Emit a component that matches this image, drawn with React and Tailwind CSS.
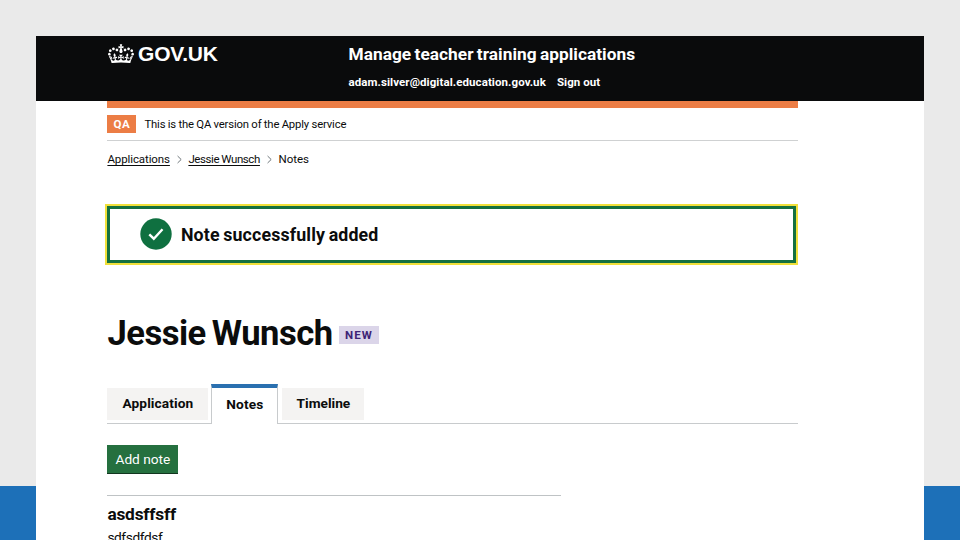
const CROWN =
  "M25 30.2c3.5 1.5 7.7-.2 9.1-3.7 1.5-3.6-.2-7.8-3.9-9.2-3.6-1.4-7.6.3-9.1 3.9-1.4 3.5.3 7.5 3.9 9zM9 39.5c3.6 1.5 7.8-.2 9.2-3.7 1.5-3.6-.2-7.8-3.9-9.1-3.6-1.5-7.6.2-9.1 3.8-1.4 3.5.3 7.5 3.8 9zM4.4 57.2c3.5 1.5 7.7-.2 9.1-3.8 1.5-3.6-.2-7.7-3.9-9.1-3.5-1.5-7.6.3-9.1 3.8-1.4 3.5.3 7.6 3.9 9.1zm38.3-21.4c3.5 1.5 7.7-.2 9.1-3.8 1.5-3.6-.2-7.7-3.9-9.1-3.6-1.5-7.6.3-9.1 3.8-1.3 3.6.4 7.7 3.9 9.1zm64.4-5.6c-3.6 1.5-7.8-.2-9.1-3.7-1.5-3.6.2-7.8 3.8-9.2 3.6-1.4 7.7.3 9.2 3.9 1.3 3.5-.4 7.5-3.9 9zm15.9 9.3c-3.6 1.5-7.7-.2-9.1-3.7-1.5-3.6.2-7.8 3.7-9.1 3.6-1.5 7.7.2 9.2 3.8 1.5 3.5-.3 7.5-3.8 9zm4.7 17.7c-3.6 1.5-7.8-.2-9.2-3.8-1.5-3.6.2-7.7 3.9-9.1 3.6-1.5 7.7.3 9.2 3.8 1.3 3.5-.4 7.6-3.9 9.1zM89.3 35.8c-3.6 1.5-7.8-.2-9.2-3.8-1.4-3.6.2-7.7 3.9-9.1 3.6-1.5 7.7.3 9.2 3.8 1.4 3.6-.3 7.7-3.9 9.1zM69.7 17.7l8.9 4.7V9.3l-8.9 2.8c-.2-.3-.5-.6-.9-.9L72.4 0H59.6l3.5 11.2c-.3.3-.6.5-.9.9l-8.8-2.8v13.1l8.8-4.7c.3.3.6.7.9.9l-5 15.4v.1c-.2.8-.4 1.6-.4 2.4 0 4.1 3.1 7.5 7 8.1h.2c.3 0 .7.1 1 .1.4 0 .7 0 1-.1h.2c4-.6 7.1-4.1 7.1-8.1 0-.8-.1-1.7-.4-2.4V34l-5.1-15.4c.4-.2.7-.6 1-.9zM66 92.8c16.9 0 32.8 1.1 47.1 3.2 4-16.9 8.9-26.7 14-33.5l-9.6-3.4c1 4.9 1.1 7.2 0 10.2-1.5-1.4-3-4.3-4.2-8.7L108.6 76c2.8-2 5-3.2 7.5-3.3-4.4 9.4-10 11.9-13.6 11.2-4.3-.8-6.3-4.6-5.6-7.9 1-4.7 5.7-5.9 8-.5 4.3-8.7-3-11.4-7.6-8.8 7.1-7.2 7.9-13.5 2.1-21.1-8 6.1-8.1 12.3-4.5 20.8-4.7-5.4-12.1-2.5-9.5 6.2 3.4-5.2 7.9-2 7.2 3.1-.6 4.3-6.4 7.8-13.5 7.2-10.3-.9-10.9-8-11.2-13.8 2.5-.5 7.1 1.8 11 7.3L80.2 60c-4.1 4.4-8 5.3-12.3 5.4 1.4-4.4 8-11.6 8-11.6H55.5s6.4 7.2 7.9 11.6c-4.2-.1-8-1-12.3-5.4l1.4 16.4c3.9-5.5 8.5-7.7 10.9-7.3-.3 5.8-.9 12.8-11.1 13.8-7.2.6-12.9-2.9-13.5-7.2-.7-5 3.8-8.3 7.1-3.1 2.7-8.7-4.6-11.6-9.4-6.2 3.7-8.5 3.6-14.7-4.6-20.8-5.8 7.6-5 13.9 2.2 21.1-4.7-2.6-11.9.1-7.7 8.8 2.3-5.5 7.1-4.2 8.1.5.7 3.3-1.3 7.1-5.7 7.9-3.5.7-9-1.8-13.5-11.2 2.5.1 4.7 1.3 7.5 3.3l-4.7-15.4c-1.2 4.4-2.7 7.2-4.3 8.7-1.1-3-.9-5.3 0-10.2l-9.5 3.4c5 6.9 9.9 16.7 14 33.5 14.8-2.1 30.8-3.2 47.7-3.2z";

function Header() {
  return (
    <header className="flex h-[64.5px] bg-[#0a0b0c] pl-[71.5px] text-white">
      <div className="flex h-9 w-[241px] items-center pb-[1px]">
        <svg viewBox="0 0 132 97" className="h-[19.5px] w-[26px]" fill="currentColor">
          <path d={CROWN} />
        </svg>
        <span className="ml-[4.5px] pt-[1px] font-['Liberation_Sans',sans-serif] text-[21px] leading-9 font-bold tracking-[-0.2px]">GOV.UK</span>
      </div>
      <div className="flex flex-col">
        <span className="h-9 text-[17.3px] leading-9 font-bold [word-spacing:-1px] tracking-[0.03px]">Manage teacher training applications</span>
        <nav className="flex gap-[11px] text-[11.5px] leading-5 font-bold tracking-[0.08px]">
          <a>adam.silver@digital.education.gov.uk</a>
          <a>Sign out</a>
        </nav>
      </div>
    </header>
  );
}

function Chevron() {
  return (
    <svg viewBox="0 0 6 10" className="h-[9px] w-[5px]" fill="none" stroke="#505a5f" strokeWidth="1">
      <path d="M0.7 0.8 5 5 0.7 9.2" />
    </svg>
  );
}

function Banner() {
  return (
    <section className="mt-[35px] -ml-[2px] h-[61px] w-[692.5px] bg-[#f0e03a] p-[2px]">
      <div className="flex h-[57px] items-center border-[3px] border-[#14703f] bg-white pl-[29.5px]">
        <svg viewBox="0 0 32 32" className="h-8 w-8" fill="none">
          <circle cx="16" cy="16" r="15.7" fill="#0f7040" />
          <path d="M9.3 16.3 13.8 20.7 22.5 11.2" stroke="#fff" strokeWidth="2.4" />
        </svg>
        <span className="ml-[9px] pt-[2px] text-[17.8px] font-bold [word-spacing:-1px] tracking-[0.14px]">Note successfully added</span>
      </div>
    </section>
  );
}

function Tabs() {
  return (
    <nav className="mt-[29px] flex h-10 items-stretch text-[13.7px] font-bold">
      <div className="flex w-[104px] border-b border-[#c8cbcd] pt-1 pb-[3px]">
        <a className="flex w-[101px] items-center justify-center bg-[#f4f3f2] tracking-[0.1px]">Application</a>
      </div>
      <a className="flex w-[67px] items-center justify-center border-x border-t-[4px] border-x-[#c8cbcd] border-t-[#2a70b0] pb-[3px] tracking-[0.15px]">Notes</a>
      <div className="flex flex-1 border-b border-[#c8cbcd] pt-1 pb-[3px] pl-[4px]">
        <a className="flex w-[82px] items-center justify-center bg-[#f4f3f2]">Timeline</a>
      </div>
    </nav>
  );
}

export default function App() {
  return (
    <div className="h-[540px] w-[960px] overflow-hidden bg-[linear-gradient(#eaeaea_486px,#1d70b8_486px)] px-9 pt-9 font-[Roboto,sans-serif] text-[#0b0c0c]">
      <main className="h-[504px] overflow-hidden bg-white whitespace-nowrap">
        <Header />
        <div className="ml-[71.4px] w-[690.5px]">
          <div className="h-[7px] bg-[#ec7d45]" />
          <div className="flex h-[33px] items-center border-b border-[#cfd1d2] text-[11.3px]">
            <strong className="mr-2 flex h-[18px] w-[29px] items-center justify-center bg-[#ec7d45] pt-[2px] text-[11.5px] font-bold tracking-[0.5px] text-white">QA</strong>
            <span className="pt-[3px] [word-spacing:-0.3px] tracking-[-0.14px]">This is the QA version of the Apply service</span>
          </div>
          <nav className="mt-[10px] flex h-[18px] items-center text-[11.5px]">
            <a className="tracking-[-0.1px] underline underline-offset-2">Applications</a>
            <span className="mr-[6.5px] ml-[7px]"><Chevron /></span>
            <a className="[word-spacing:-0.4px] tracking-[-0.4px] underline underline-offset-2">Jessie Wunsch</a>
            <span className="mr-[6.5px] ml-[7px]"><Chevron /></span>
            <span>Notes</span>
          </nav>
          <Banner />
          <h1 className="mt-[45px] flex h-[45px] items-center">
            <span className="w-[225.5px] pt-[4px] text-[34.6px] font-bold [word-spacing:-2px] tracking-[-0.5px]">Jessie Wunsch</span>
            <strong className="mt-[6px] ml-[6px] flex h-[18px] w-[40px] items-center justify-center bg-[#dbd5e9] pt-[1px] text-[11.5px] font-bold tracking-[1px] text-[#3d2375]">NEW</strong>
          </h1>
          <Tabs />
          <button className="mt-[21px] flex h-[29px] w-[71px] items-center justify-center border-b-[1.5px] border-[#12361f] bg-[#25703f] pt-[1px] text-[13.7px] text-white">Add note</button>
          <article className="mt-[21px] w-[453.5px] border-t border-[#bfc3c5] pt-[7px]">
            <h2 className="text-[17.3px] leading-[23px] font-bold tracking-[-0.2px]">asdsffsff</h2>
            <p className="mt-[1px] text-[13.7px] leading-5 tracking-[-0.4px]">sdfsdfdsf</p>
          </article>
        </div>
      </main>
    </div>
  );
}
